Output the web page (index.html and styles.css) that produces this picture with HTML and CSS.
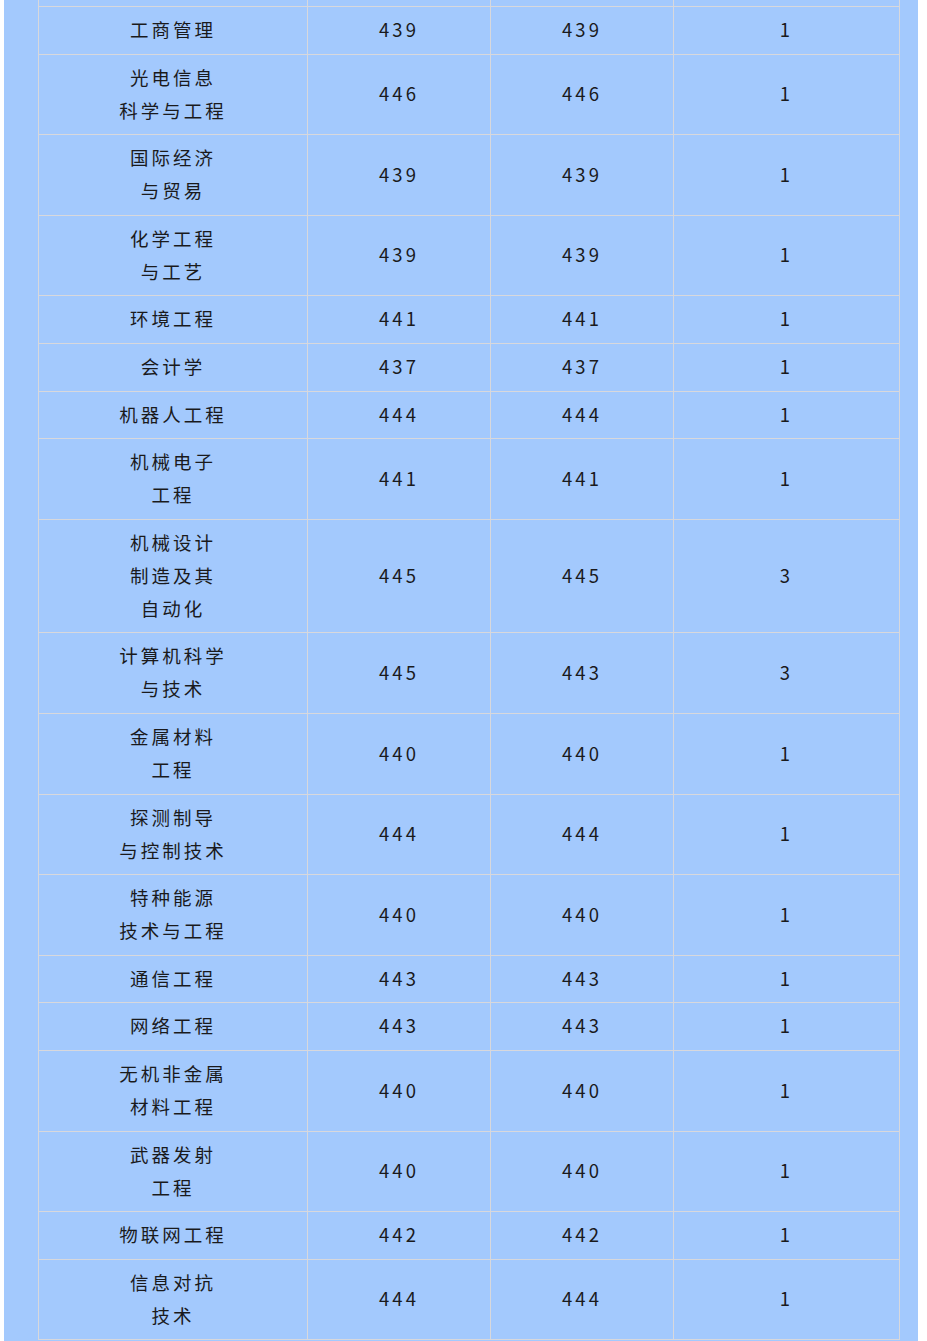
FILE: index.html
```html
<!DOCTYPE html>
<html lang="zh">
<head>
<meta charset="utf-8">
<link rel="stylesheet" href="styles.css">
</head>
<body>
<div class="panel">
<table class="scores">
<colgroup><col class="c1"><col class="c2"><col class="c3"><col class="c4"></colgroup>
<tbody>
<tr class="cut"><td></td><td></td><td></td><td></td></tr>
<tr><td>工商管理</td><td>439</td><td>439</td><td>1</td></tr>
<tr><td>光电信息<br>科学与工程</td><td>446</td><td>446</td><td>1</td></tr>
<tr><td>国际经济<br>与贸易</td><td>439</td><td>439</td><td>1</td></tr>
<tr><td>化学工程<br>与工艺</td><td>439</td><td>439</td><td>1</td></tr>
<tr><td>环境工程</td><td>441</td><td>441</td><td>1</td></tr>
<tr><td>会计学</td><td>437</td><td>437</td><td>1</td></tr>
<tr><td>机器人工程</td><td>444</td><td>444</td><td>1</td></tr>
<tr><td>机械电子<br>工程</td><td>441</td><td>441</td><td>1</td></tr>
<tr><td>机械设计<br>制造及其<br>自动化</td><td>445</td><td>445</td><td>3</td></tr>
<tr><td>计算机科学<br>与技术</td><td>445</td><td>443</td><td>3</td></tr>
<tr><td>金属材料<br>工程</td><td>440</td><td>440</td><td>1</td></tr>
<tr><td>探测制导<br>与控制技术</td><td>444</td><td>444</td><td>1</td></tr>
<tr><td>特种能源<br>技术与工程</td><td>440</td><td>440</td><td>1</td></tr>
<tr><td>通信工程</td><td>443</td><td>443</td><td>1</td></tr>
<tr><td>网络工程</td><td>443</td><td>443</td><td>1</td></tr>
<tr><td>无机非金属<br>材料工程</td><td>440</td><td>440</td><td>1</td></tr>
<tr><td>武器发射<br>工程</td><td>440</td><td>440</td><td>1</td></tr>
<tr><td>物联网工程</td><td>442</td><td>442</td><td>1</td></tr>
<tr><td>信息对抗<br>技术</td><td>444</td><td>444</td><td>1</td></tr>
</tbody>
</table>
</div>
</body>
</html>
```

FILE: styles.css
```css
html, body {
  margin: 0;
  padding: 0;
  background: #ffffff;
}
.panel {
  margin-left: 4px;
  width: 914px;
  box-sizing: border-box;
  padding: 0 18px 30px 34px;
  background: #a3c9fd;
}
.scores {
  border-collapse: collapse;
  table-layout: fixed;
  width: 861px;
  font-family: "Noto Sans CJK SC", "Noto Sans", sans-serif;
  font-size: 18.5px;
  letter-spacing: 3px;
  color: #1a1a1c;
}
.c1 { width: 269px; }
.c2 { width: 183px; }
.c3 { width: 183px; }
.c4 { width: 226px; }
.scores td {
  border: 1px solid #d8d8dc;
  text-align: center;
  vertical-align: middle;
  line-height: 33px;
  padding: 6.1px 0 7.5px;
}
.scores tr.cut td {
  padding: 0;
  height: 6px;
  line-height: 0;
  border-top: none;
}
```
